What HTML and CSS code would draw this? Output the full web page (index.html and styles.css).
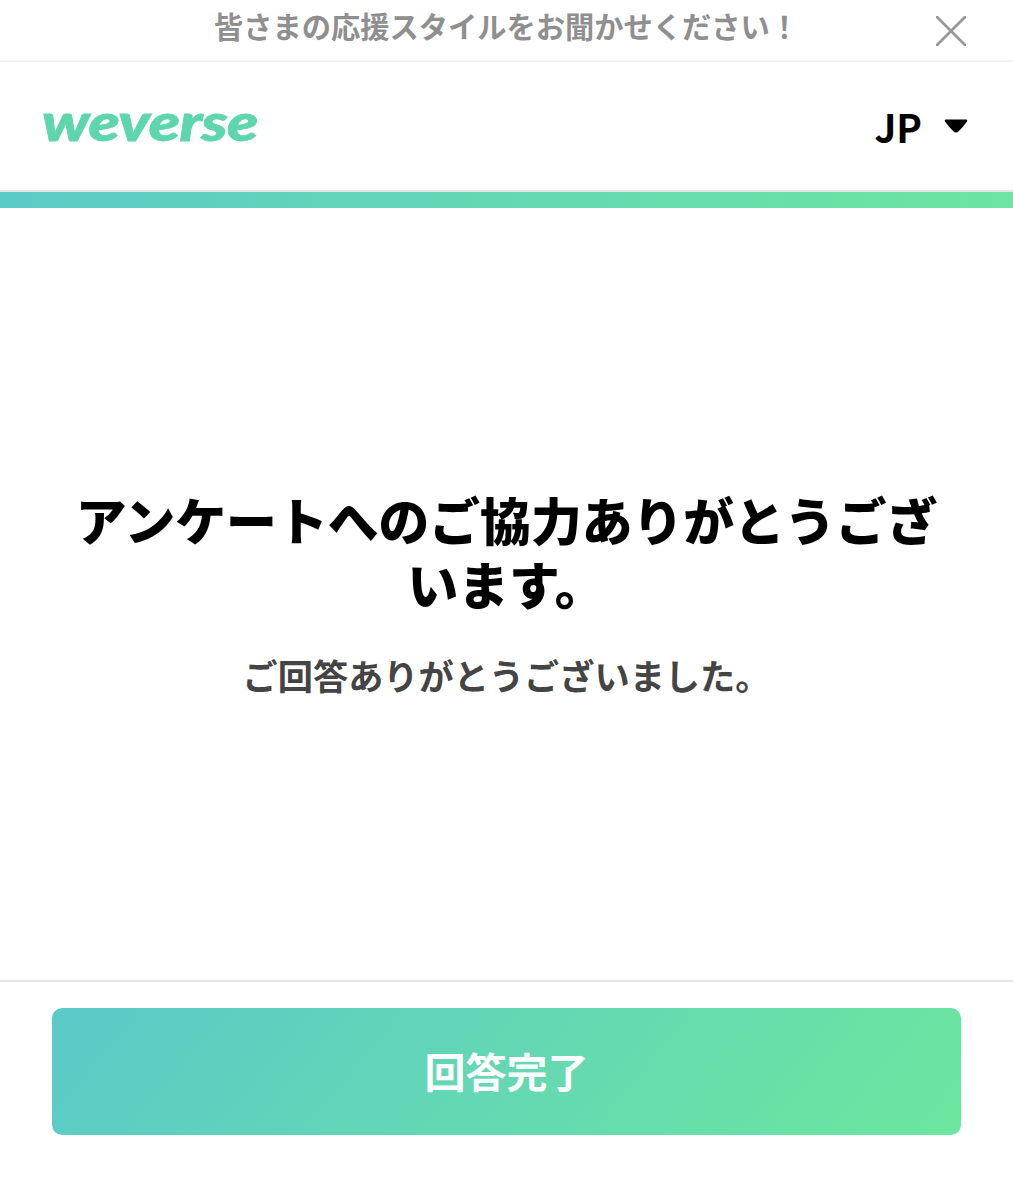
FILE: index.html
```html
<!DOCTYPE html>
<html lang="ja">
<head>
  <meta charset="UTF-8">
  <meta name="viewport" content="width=device-width, initial-scale=1.0">
  <title>weverse</title>
  <link rel="stylesheet" href="styles.css">
</head>
<body>
  <div class="page">
    <!-- Survey banner -->
    <div class="banner">
      <span class="banner-text">皆さまの応援スタイルをお聞かせください！</span>
      <svg class="close-icon" viewBox="0 0 30 30" aria-label="close">
        <path d="M1 1 L29 29 M29 1 L1 29"></path>
      </svg>
    </div>

    <!-- Logo and language -->
    <header class="header">
      <span class="logo">weverse</span>
      <div class="lang">
        <span class="lang-code">JP</span>
        <svg class="lang-caret" viewBox="0 0 24 14" aria-hidden="true">
          <path d="M2 0.5 H22 Q24 0.5 23 2.5 Q19 8 14.5 12.5 Q12 14.5 9.5 12.5 Q5 8 1 2.5 Q0 0.5 2 0.5 Z"></path>
        </svg>
      </div>
    </header>
    <div class="progress"></div>

    <main class="content">
      <h1 class="title">アンケートへのご協力ありがとうございます。</h1>
      <p class="subtitle">ご回答ありがとうございました。</p>
    </main>

    <footer class="footer">
      <button class="done-button">回答完了</button>
    </footer>
  </div>
</body>
</html>
```

FILE: styles.css
```css
* { box-sizing: border-box; }
body {
  margin: 0;
  background-color: #fff;
  font-family: "Noto Sans CJK JP", "Noto Sans", sans-serif;
}
.page {
  width: 1013px;
  height: 1200px;
  display: flex;
  flex-direction: column;
}
.banner {
  height: 62px;
  border-bottom: 2px solid #f2f2f2;
  display: flex;
  align-items: center;
  justify-content: center;
  position: relative;
}
.banner-text {
  font-size: 29.25px;
  font-weight: 700;
  line-height: 54px;
  color: #8f8f8f;
  margin-top: -11px;
}
.close-icon {
  position: absolute;
  top: 16px;
  left: 936px;
  width: 30px;
  height: 30px;
}
.close-icon path {
  fill: none;
  stroke: #999;
  stroke-width: 2.8;
  stroke-linecap: round;
}
.header {
  height: 130px;
  border-bottom: 2px solid #e4e4e4;
  display: flex;
  align-items: center;
  justify-content: space-between;
  padding: 0 45px 0 42px;
}
.logo {
  font-family: "Lato", sans-serif;
  font-size: 52px;
  font-weight: 900;
  font-style: italic;
  line-height: 60px;
  letter-spacing: -0.5px;
  color: #5dd6ad;
  margin-top: -10px;
  transform: scaleX(1.23);
  transform-origin: left center;
  -webkit-text-stroke: 0.8px #5dd6ad;
}
.lang {
  display: flex;
  align-items: center;
  gap: 22px;
}
.lang-code {
  font-size: 38.5px;
  font-weight: 700;
  line-height: 50px;
  color: #000;
}
.lang-caret {
  width: 24px;
  height: 14px;
  fill: #000;
}
.progress {
  height: 16px;
  background: linear-gradient(90deg, #5bcbc6, #6de5a0);
}
.content {
  flex: 1;
  display: flex;
  flex-direction: column;
  align-items: center;
  padding: 279px 70px 0;
  border-bottom: 2px solid #e6e6e6;
}
.title {
  margin: 0;
  font-size: 50.8px;
  font-weight: 900;
  line-height: 64px;
  color: #000;
  text-align: center;
}
.subtitle {
  margin: 35px 0 0;
  font-size: 35.2px;
  font-weight: 700;
  line-height: 50px;
  color: #444;
  text-align: center;
}
.footer {
  height: 218px;
  padding: 26px 52px 0;
}
.done-button {
  display: block;
  width: 100%;
  height: 127px;
  border: none;
  border-radius: 10px;
  padding: 0 0 4px;
  background: linear-gradient(130deg, #5bc9c8, #6de69e);
  color: #fff;
  font-family: inherit;
  font-size: 41px;
  font-weight: 700;
}
```
